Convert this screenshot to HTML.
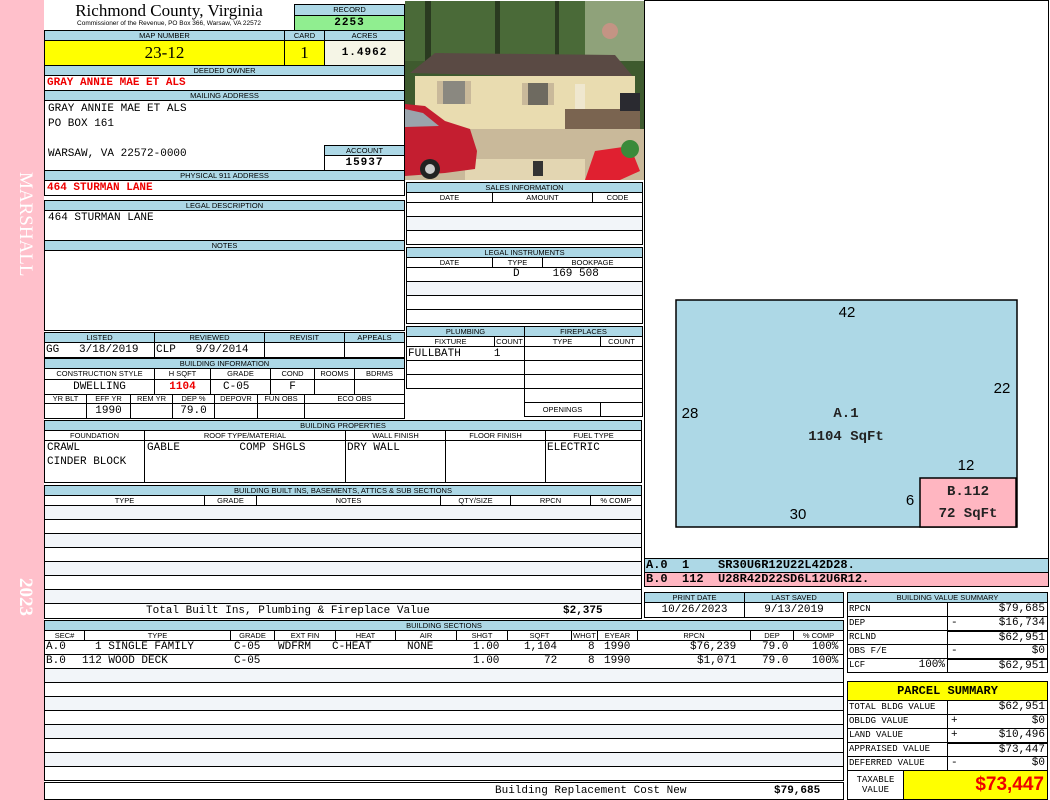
<!DOCTYPE html>
<html><head><meta charset="utf-8"><style>
*{margin:0;padding:0}
body{width:1050px;height:800px;position:relative;background:#fff;overflow:hidden;font-family:"Liberation Mono",monospace}
div{position:absolute;box-sizing:border-box}
.b{border:1px solid #000}
.h{background:#add8e6;border:1px solid #000;font:7.5px/9px "Liberation Sans",sans-serif;text-align:center;color:#000;overflow:hidden;white-space:nowrap}
.s{font:7.5px/9px "Liberation Sans",sans-serif;text-align:center;border:1px solid #000;background:#fff;white-space:nowrap;overflow:hidden}
.m{font:11px/14px "Liberation Mono",monospace;white-space:pre;color:#000}
.r{color:#e00;font-weight:bold}
.alt{background:#f2f5f9}
.t{position:absolute;font:11px/14px "Liberation Mono",monospace;white-space:pre}
.tr{position:absolute;font:11px/14px "Liberation Mono",monospace;white-space:pre;text-align:right}
</style></head><body>
<!-- sidebar -->
<div style="left:0;top:0;width:44px;height:800px;background:#ffc0cb"></div>
<div style="left:6px;top:172px;width:30px;height:150px;"><div style="left:30px;top:0;transform-origin:0 0;transform:rotate(90deg);font:19px 'Liberation Serif',serif;color:#fff;white-space:nowrap">MARSHALL</div></div>
<div style="left:6px;top:578px;width:30px;height:60px;"><div style="left:30px;top:0;transform-origin:0 0;transform:rotate(90deg);font:bold 19px 'Liberation Serif',serif;color:#fff;white-space:nowrap">2023</div></div>

<!-- title -->
<div style="left:44px;top:1px;width:250px;text-align:center;font:17px/20px 'Liberation Serif',serif">Richmond County, Virginia</div>
<div style="left:44px;top:19px;width:250px;text-align:center;font:6.5px/9px 'Liberation Sans',sans-serif;white-space:nowrap">Commissioner of the Revenue, PO Box 366, Warsaw, VA 22572</div>
<div class="h" style="left:294px;top:4px;width:111px;height:12px">RECORD</div>
<div class="b m" style="left:294px;top:15px;width:111px;height:16px;background:#90ee90;text-align:center;font-weight:bold;letter-spacing:1px;line-height:14px">2253</div>

<div class="h" style="left:44px;top:30px;width:241px;height:11px">MAP NUMBER</div>
<div class="h" style="left:284px;top:30px;width:41px;height:11px">CARD</div>
<div class="h" style="left:324px;top:30px;width:81px;height:11px">ACRES</div>
<div class="b" style="left:44px;top:40px;width:241px;height:26px;background:#ffff00;font:17px/24px 'Liberation Serif',serif;text-align:center">23-12</div>
<div class="b" style="left:284px;top:40px;width:41px;height:26px;background:#ffff00;font:17px/24px 'Liberation Serif',serif;text-align:center">1</div>
<div class="b m" style="left:324px;top:40px;width:81px;height:26px;background:#f5f5e6;text-align:center;font-weight:bold;line-height:24px;letter-spacing:1px">1.4962</div>

<div class="h" style="left:44px;top:65px;width:361px;height:11px">DEEDED OWNER</div>
<div class="b m r" style="left:44px;top:75px;width:361px;height:16px;padding-left:2px">GRAY ANNIE MAE ET ALS</div>
<div class="h" style="left:44px;top:90px;width:361px;height:11px">MAILING ADDRESS</div>
<div class="b m" style="left:44px;top:100px;width:361px;height:71px;padding:1px 3px;line-height:15px">GRAY ANNIE MAE ET ALS
PO BOX 161

WARSAW, VA 22572-0000</div>
<div class="h" style="left:324px;top:145px;width:81px;height:11px">ACCOUNT</div>
<div class="b m" style="left:324px;top:155px;width:81px;height:16px;text-align:center;font-weight:bold;letter-spacing:1px">15937</div>
<div class="h" style="left:44px;top:170px;width:361px;height:11px">PHYSICAL 911 ADDRESS</div>
<div class="b m r" style="left:44px;top:180px;width:361px;height:16px;padding-left:2px">464 STURMAN LANE</div>

<div class="b" style="left:44px;top:200px;width:361px;height:41px"></div>
<div class="h" style="left:44px;top:200px;width:361px;height:11px">LEGAL DESCRIPTION</div>
<div class="m" style="left:48px;top:211px">464 STURMAN LANE</div>
<div class="b" style="left:44px;top:240px;width:361px;height:91px"></div>
<div class="h" style="left:44px;top:240px;width:361px;height:11px">NOTES</div>

<!-- listed -->
<div class="h" style="left:44px;top:332px;width:111px;height:11px">LISTED</div>
<div class="h" style="left:154px;top:332px;width:111px;height:11px">REVIEWED</div>
<div class="h" style="left:264px;top:332px;width:81px;height:11px">REVISIT</div>
<div class="h" style="left:344px;top:332px;width:61px;height:11px">APPEALS</div>
<div class="b m" style="left:44px;top:342px;width:111px;height:16px;padding-left:1px">GG   3/18/2019</div>
<div class="b m" style="left:154px;top:342px;width:111px;height:16px;padding-left:1px">CLP   9/9/2014</div>
<div class="b" style="left:264px;top:342px;width:81px;height:16px"></div>
<div class="b" style="left:344px;top:342px;width:61px;height:16px"></div>

<!-- building info -->
<div class="h" style="left:44px;top:358px;width:361px;height:11px">BUILDING INFORMATION</div>
<div class="s" style="left:44px;top:368px;width:111px;height:12px">CONSTRUCTION STYLE</div>
<div class="s" style="left:154px;top:368px;width:57px;height:12px">H SQFT</div>
<div class="s" style="left:210px;top:368px;width:61px;height:12px">GRADE</div>
<div class="s" style="left:270px;top:368px;width:45px;height:12px">COND</div>
<div class="s" style="left:314px;top:368px;width:41px;height:12px">ROOMS</div>
<div class="s" style="left:354px;top:368px;width:51px;height:12px">BDRMS</div>
<div class="b m" style="left:44px;top:379px;width:111px;height:16px;text-align:center">DWELLING</div>
<div class="b m r" style="left:154px;top:379px;width:57px;height:16px;text-align:center">1104</div>
<div class="b m" style="left:210px;top:379px;width:61px;height:16px;padding-left:12px">C-05</div>
<div class="b m" style="left:270px;top:379px;width:45px;height:16px;text-align:center">F</div>
<div class="b" style="left:314px;top:379px;width:41px;height:16px"></div>
<div class="b" style="left:354px;top:379px;width:51px;height:16px"></div>
<div class="s" style="left:44px;top:394px;width:43px;height:10px;line-height:8px">YR BLT</div>
<div class="s" style="left:86px;top:394px;width:45px;height:10px;line-height:8px">EFF YR</div>
<div class="s" style="left:130px;top:394px;width:43px;height:10px;line-height:8px">REM YR</div>
<div class="s" style="left:172px;top:394px;width:43px;height:10px;line-height:8px">DEP %</div>
<div class="s" style="left:214px;top:394px;width:44px;height:10px;line-height:8px">DEPOVR</div>
<div class="s" style="left:257px;top:394px;width:48px;height:10px;line-height:8px">FUN OBS</div>
<div class="s" style="left:304px;top:394px;width:101px;height:10px;line-height:8px">ECO OBS</div>
<div class="b" style="left:44px;top:403px;width:43px;height:16px"></div>
<div class="b m" style="left:86px;top:403px;width:45px;height:16px;text-align:center">1990</div>
<div class="b" style="left:130px;top:403px;width:43px;height:16px"></div>
<div class="b m" style="left:172px;top:403px;width:43px;height:16px;text-align:center">79.0</div>
<div class="b" style="left:214px;top:403px;width:44px;height:16px"></div>
<div class="b" style="left:257px;top:403px;width:48px;height:16px"></div>
<div class="b" style="left:304px;top:403px;width:101px;height:16px"></div>

<!-- building properties -->
<div class="h" style="left:44px;top:420px;width:598px;height:11px">BUILDING PROPERTIES</div>
<div class="s" style="left:44px;top:430px;width:101px;height:11px">FOUNDATION</div>
<div class="s" style="left:144px;top:430px;width:202px;height:11px">ROOF TYPE/MATERIAL</div>
<div class="s" style="left:345px;top:430px;width:101px;height:11px">WALL FINISH</div>
<div class="s" style="left:445px;top:430px;width:101px;height:11px">FLOOR FINISH</div>
<div class="s" style="left:545px;top:430px;width:97px;height:11px">FUEL TYPE</div>
<div class="b m" style="left:44px;top:440px;width:101px;height:43px;padding-left:2px">CRAWL
CINDER BLOCK</div>
<div class="b m" style="left:144px;top:440px;width:202px;height:43px;padding-left:2px">GABLE         COMP SHGLS</div>
<div class="b m" style="left:345px;top:440px;width:101px;height:43px;padding-left:1px">DRY WALL</div>
<div class="b" style="left:445px;top:440px;width:101px;height:43px"></div>
<div class="b m" style="left:545px;top:440px;width:97px;height:43px;padding-left:1px">ELECTRIC</div>

<!-- built ins -->
<div class="h" style="left:44px;top:485px;width:598px;height:11px">BUILDING BUILT INS, BASEMENTS, ATTICS &amp; SUB SECTIONS</div>
<div class="s" style="left:44px;top:495px;width:161px;height:11px">TYPE</div>
<div class="s" style="left:204px;top:495px;width:53px;height:11px">GRADE</div>
<div class="s" style="left:256px;top:495px;width:185px;height:11px">NOTES</div>
<div class="s" style="left:440px;top:495px;width:71px;height:11px">QTY/SIZE</div>
<div class="s" style="left:510px;top:495px;width:81px;height:11px">RPCN</div>
<div class="s" style="left:590px;top:495px;width:52px;height:11px">% COMP</div>
<div class="b alt" style="left:44px;top:505px;width:598px;height:15px"></div>
<div class="b" style="left:44px;top:519px;width:598px;height:15px"></div>
<div class="b alt" style="left:44px;top:533px;width:598px;height:15px"></div>
<div class="b" style="left:44px;top:547px;width:598px;height:15px"></div>
<div class="b alt" style="left:44px;top:561px;width:598px;height:15px"></div>
<div class="b" style="left:44px;top:575px;width:598px;height:15px"></div>
<div class="b alt" style="left:44px;top:589px;width:598px;height:15px"></div>
<div class="b m" style="left:44px;top:603px;width:598px;height:16px"><span style="position:absolute;left:101px;top:0">Total Built Ins, Plumbing &amp; Fireplace Value</span><span style="position:absolute;left:518px;top:0;font-weight:bold">$2,375</span></div>

<!-- building sections -->
<div class="h" style="left:44px;top:620px;width:800px;height:11px">BUILDING SECTIONS</div>
<div class="s" style="left:44px;top:630px;width:41px;height:11px">SEC#</div>
<div class="s" style="left:84px;top:630px;width:147px;height:11px">TYPE</div>
<div class="s" style="left:230px;top:630px;width:45px;height:11px">GRADE</div>
<div class="s" style="left:274px;top:630px;width:62px;height:11px">EXT FIN</div>
<div class="s" style="left:335px;top:630px;width:61px;height:11px">HEAT</div>
<div class="s" style="left:395px;top:630px;width:62px;height:11px">AIR</div>
<div class="s" style="left:456px;top:630px;width:52px;height:11px">SHGT</div>
<div class="s" style="left:507px;top:630px;width:65px;height:11px">SQFT</div>
<div class="s" style="left:571px;top:630px;width:27px;height:11px">WHGT</div>
<div class="s" style="left:597px;top:630px;width:41px;height:11px">EYEAR</div>
<div class="s" style="left:637px;top:630px;width:114px;height:11px">RPCN</div>
<div class="s" style="left:750px;top:630px;width:44px;height:11px">DEP</div>
<div class="s" style="left:793px;top:630px;width:51px;height:11px">% COMP</div>
<div class="b" style="left:44px;top:640px;width:800px;height:15px"></div>
<div class="b" style="left:44px;top:654px;width:800px;height:15px"></div>
<span class="t" style="left:46px;top:640px">A.0</span>
<span class="t" style="left:95px;top:640px">1 SINGLE FAMILY</span>
<span class="t" style="left:234px;top:640px">C-05</span>
<span class="t" style="left:278px;top:640px">WDFRM</span>
<span class="t" style="left:332px;top:640px">C-HEAT</span>
<span class="t" style="left:407px;top:640px">NONE</span>
<span class="t" style="left:473px;top:640px">1.00</span>
<span class="t" style="left:524px;top:640px">1,104</span>
<span class="t" style="left:588px;top:640px">8</span>
<span class="t" style="left:604px;top:640px">1990</span>
<span class="t" style="left:690px;top:640px">$76,239</span>
<span class="t" style="left:762px;top:640px">79.0</span>
<span class="t" style="left:812px;top:640px">100%</span>
<span class="t" style="left:46px;top:654px">B.0</span>
<span class="t" style="left:82px;top:654px">112 WOOD DECK</span>
<span class="t" style="left:234px;top:654px">C-05</span>
<span class="t" style="left:473px;top:654px">1.00</span>
<span class="t" style="left:544px;top:654px">72</span>
<span class="t" style="left:588px;top:654px">8</span>
<span class="t" style="left:604px;top:654px">1990</span>
<span class="t" style="left:697px;top:654px">$1,071</span>
<span class="t" style="left:762px;top:654px">79.0</span>
<span class="t" style="left:812px;top:654px">100%</span>
<div class="b alt" style="left:44px;top:668px;width:800px;height:15px"></div>
<div class="b" style="left:44px;top:682px;width:800px;height:15px"></div>
<div class="b alt" style="left:44px;top:696px;width:800px;height:15px"></div>
<div class="b" style="left:44px;top:710px;width:800px;height:15px"></div>
<div class="b alt" style="left:44px;top:724px;width:800px;height:15px"></div>
<div class="b" style="left:44px;top:738px;width:800px;height:15px"></div>
<div class="b alt" style="left:44px;top:752px;width:800px;height:15px"></div>
<div class="b" style="left:44px;top:766px;width:800px;height:15px"></div>
<div class="b m" style="left:44px;top:782px;width:800px;height:18px;line-height:17px"><span style="position:absolute;left:450px;top:0">Building Replacement Cost New</span><span style="position:absolute;left:729px;top:0;font-weight:bold">$79,685</span></div>

<!-- photo -->
<svg style="position:absolute;left:405px;top:1px" width="239" height="179" viewBox="0 0 239 179">
<rect width="239" height="179" fill="#3e5a2e"/>
<rect x="0" y="0" width="239" height="60" fill="#4a6a38"/>
<rect x="180" y="0" width="59" height="60" fill="#8fa27a"/>
<circle cx="205" cy="30" r="8" fill="#e88a8a" opacity=".6"/>
<rect x="20" y="0" width="6" height="60" fill="#2a3a20"/>
<rect x="90" y="0" width="5" height="55" fill="#2a3a20"/>
<rect x="150" y="0" width="4" height="55" fill="#2a3a20"/>
<polygon points="5,72 30,52 210,54 230,78" fill="#5a4a44"/>
<rect x="10" y="75" width="220" height="55" fill="#e9dcb0"/>
<rect x="38" y="80" width="22" height="23" fill="#8a8880"/><rect x="32" y="80" width="6" height="23" fill="#c9b99a"/><rect x="60" y="80" width="6" height="23" fill="#c9b99a"/>
<rect x="123" y="82" width="20" height="22" fill="#6e6a60"/><rect x="117" y="82" width="6" height="22" fill="#c9b99a"/><rect x="143" y="82" width="6" height="22" fill="#c9b99a"/>
<rect x="170" y="83" width="10" height="27" fill="#efe7cf"/>
<rect x="160" y="108" width="75" height="25" fill="#7a6450"/>
<rect x="215" y="92" width="20" height="18" fill="#2a2a30"/>
<rect x="0" y="128" width="239" height="51" fill="#c9b99a"/>
<rect x="60" y="158" width="120" height="21" fill="#e3d6b2"/>
<path d="M0,103 L20,105 L40,120 L65,128 L72,150 L70,168 L40,172 L0,175 Z" fill="#c41e30"/>
<path d="M0,108 L18,112 L34,125 L0,126 Z" fill="#9aa4ac"/>
<circle cx="25" cy="168" r="10" fill="#222"/><circle cx="25" cy="168" r="5" fill="#ccc"/>
<rect x="128" y="160" width="10" height="15" fill="#333"/>
<path d="M190,150 L225,145 L235,170 L215,179 L180,179 Z" fill="#e02030"/>
<circle cx="225" cy="148" r="9" fill="#3a8a3a"/>
</svg>

<!-- sales -->
<div class="h" style="left:406px;top:182px;width:237px;height:11px">SALES INFORMATION</div>
<div class="s" style="left:406px;top:192px;width:87px;height:11px">DATE</div>
<div class="s" style="left:492px;top:192px;width:101px;height:11px">AMOUNT</div>
<div class="s" style="left:592px;top:192px;width:51px;height:11px">CODE</div>
<div class="b" style="left:406px;top:202px;width:237px;height:15px"></div>
<div class="b alt" style="left:406px;top:216px;width:237px;height:15px"></div>
<div class="b" style="left:406px;top:230px;width:237px;height:15px"></div>

<div class="h" style="left:406px;top:247px;width:237px;height:11px">LEGAL INSTRUMENTS</div>
<div class="s" style="left:406px;top:257px;width:87px;height:11px">DATE</div>
<div class="s" style="left:492px;top:257px;width:51px;height:11px">TYPE</div>
<div class="s" style="left:542px;top:257px;width:101px;height:11px">BOOKPAGE</div>
<div class="b" style="left:406px;top:267px;width:237px;height:15px"></div>
<div class="m" style="left:513px;top:267px">D     169 508</div>
<div class="b alt" style="left:406px;top:281px;width:237px;height:15px"></div>
<div class="b" style="left:406px;top:295px;width:237px;height:15px"></div>
<div class="b" style="left:406px;top:309px;width:237px;height:15px"></div>

<!-- plumbing -->
<div class="h" style="left:406px;top:326px;width:119px;height:11px">PLUMBING</div>
<div class="h" style="left:524px;top:326px;width:119px;height:11px">FIREPLACES</div>
<div class="s" style="left:406px;top:336px;width:89px;height:11px">FIXTURE</div>
<div class="s" style="left:494px;top:336px;width:31px;height:11px">COUNT</div>
<div class="s" style="left:524px;top:336px;width:77px;height:11px">TYPE</div>
<div class="s" style="left:600px;top:336px;width:43px;height:11px">COUNT</div>
<div class="b m" style="left:406px;top:346px;width:119px;height:15px;padding-left:1px">FULLBATH     1</div>
<div class="b" style="left:406px;top:360px;width:119px;height:15px"></div>
<div class="b" style="left:406px;top:374px;width:119px;height:15px"></div>
<div class="b" style="left:524px;top:346px;width:119px;height:15px"></div>
<div class="b" style="left:524px;top:360px;width:119px;height:15px"></div>
<div class="b" style="left:524px;top:374px;width:119px;height:15px"></div>
<div class="b" style="left:524px;top:388px;width:119px;height:15px"></div>
<div class="s" style="left:524px;top:402px;width:77px;height:15px;line-height:13px">OPENINGS</div>
<div class="b" style="left:600px;top:402px;width:43px;height:15px"></div>

<!-- sketch -->
<div class="b" style="left:644px;top:0;width:405px;height:559px"></div>
<svg style="position:absolute;left:644px;top:0" width="405" height="559">
<rect x="32" y="300" width="341" height="227" fill="#add8e6" stroke="#000" stroke-width="1.5"/>
<rect x="276" y="478" width="96" height="49" fill="#ffb6c1" stroke="#000" stroke-width="1.5"/>
<g font-family="Liberation Sans, sans-serif" font-size="15" text-anchor="middle">
<text x="203" y="317">42</text><text x="46" y="418">28</text><text x="358" y="393">22</text>
<text x="322" y="470">12</text><text x="266" y="505">6</text><text x="154" y="519">30</text></g>
<g font-family="Liberation Mono, monospace" font-size="14" font-weight="bold" text-anchor="middle" fill="#222">
<text x="202" y="417">A.1</text><text x="202" y="440">1104 SqFt</text>
<text x="324" y="495">B.112</text><text x="324" y="517">72 SqFt</text></g>
</svg>
<div class="b m" style="left:644px;top:558px;width:405px;height:15px;background:#add8e6;font-weight:bold;padding-left:1px;line-height:13px;font-size:12px">A.0  1    SR30U6R12U22L42D28.</div>
<div class="b m" style="left:644px;top:572px;width:405px;height:15px;background:#ffb6c1;font-weight:bold;padding-left:1px;line-height:13px;font-size:12px">B.0  112  U28R42D22SD6L12U6R12.</div>

<!-- print date -->
<div class="h" style="left:644px;top:592px;width:101px;height:11px">PRINT DATE</div>
<div class="h" style="left:744px;top:592px;width:100px;height:11px">LAST SAVED</div>
<div class="b m" style="left:644px;top:602px;width:101px;height:16px;text-align:center">10/26/2023</div>
<div class="b m" style="left:744px;top:602px;width:100px;height:16px;text-align:center">9/13/2019</div>

<!-- value summary -->
<div class="h" style="left:847px;top:592px;width:201px;height:11px">BUILDING VALUE SUMMARY</div>
<div class="b m" style="left:847px;top:602px;width:101px;height:15px;font-size:9px;line-height:13px;padding-left:1px">RPCN</div>
<div class="b m" style="left:947px;top:602px;width:101px;height:15px;text-align:right;padding-right:2px;line-height:13px">$79,685</div>
<div class="b m" style="left:847px;top:616px;width:101px;height:15px;font-size:9px;line-height:13px;padding-left:1px">DEP</div>
<div class="b m" style="left:947px;top:616px;width:101px;height:15px;text-align:right;padding-right:2px;line-height:13px"><span style="position:absolute;left:3px">-</span>$16,734</div>
<div class="b m" style="left:847px;top:630px;width:101px;height:15px;font-size:9px;line-height:13px;padding-left:1px">RCLND</div>
<div class="b m" style="left:947px;top:630px;width:101px;height:15px;text-align:right;padding-right:2px;line-height:13px;border-top:2px solid #000">$62,951</div>
<div class="b m" style="left:847px;top:644px;width:101px;height:15px;font-size:9px;line-height:13px;padding-left:1px">OBS F/E</div>
<div class="b m" style="left:947px;top:644px;width:101px;height:15px;text-align:right;padding-right:2px;line-height:13px"><span style="position:absolute;left:3px">-</span>$0</div>
<div class="b m" style="left:847px;top:658px;width:101px;height:15px;font-size:9px;line-height:13px;padding-left:1px">LCF<span style="position:absolute;right:2px;font-size:11px">100%</span></div>
<div class="b m" style="left:947px;top:658px;width:101px;height:15px;text-align:right;padding-right:2px;line-height:13px;border-top:2px solid #000">$62,951</div>

<!-- parcel summary -->
<div class="b" style="left:847px;top:681px;width:201px;height:20px;background:#ffff00;font:bold 12px/18px 'Liberation Mono',monospace;text-align:center">PARCEL SUMMARY</div>
<div class="b m" style="left:847px;top:700px;width:101px;height:15px;font-size:9px;line-height:13px;padding-left:1px">TOTAL BLDG VALUE</div>
<div class="b m" style="left:947px;top:700px;width:101px;height:15px;text-align:right;padding-right:2px;line-height:13px">$62,951</div>
<div class="b m" style="left:847px;top:714px;width:101px;height:15px;font-size:9px;line-height:13px;padding-left:1px">OBLDG VALUE</div>
<div class="b m" style="left:947px;top:714px;width:101px;height:15px;text-align:right;padding-right:2px;line-height:13px"><span style="position:absolute;left:3px">+</span>$0</div>
<div class="b m" style="left:847px;top:728px;width:101px;height:15px;font-size:9px;line-height:13px;padding-left:1px">LAND VALUE</div>
<div class="b m" style="left:947px;top:728px;width:101px;height:15px;text-align:right;padding-right:2px;line-height:13px"><span style="position:absolute;left:3px">+</span>$10,496</div>
<div class="b m" style="left:847px;top:742px;width:101px;height:15px;font-size:9px;line-height:13px;padding-left:1px">APPRAISED VALUE</div>
<div class="b m" style="left:947px;top:742px;width:101px;height:15px;text-align:right;padding-right:2px;line-height:13px;border-top:2px solid #000">$73,447</div>
<div class="b m" style="left:847px;top:756px;width:101px;height:15px;font-size:9px;line-height:13px;padding-left:1px">DEFERRED VALUE</div>
<div class="b m" style="left:947px;top:756px;width:101px;height:15px;text-align:right;padding-right:2px;line-height:13px"><span style="position:absolute;left:3px">-</span>$0</div>
<div class="b m" style="left:847px;top:770px;width:57px;height:30px;font-size:9px;line-height:10px;text-align:center;padding-top:4px">TAXABLE
VALUE</div>
<div class="b" style="left:903px;top:770px;width:145px;height:30px;background:#ffff00;color:#e00;font:bold 19px/28px 'Liberation Sans',sans-serif;text-align:right;padding-right:3px">$73,447</div>
</body></html>
